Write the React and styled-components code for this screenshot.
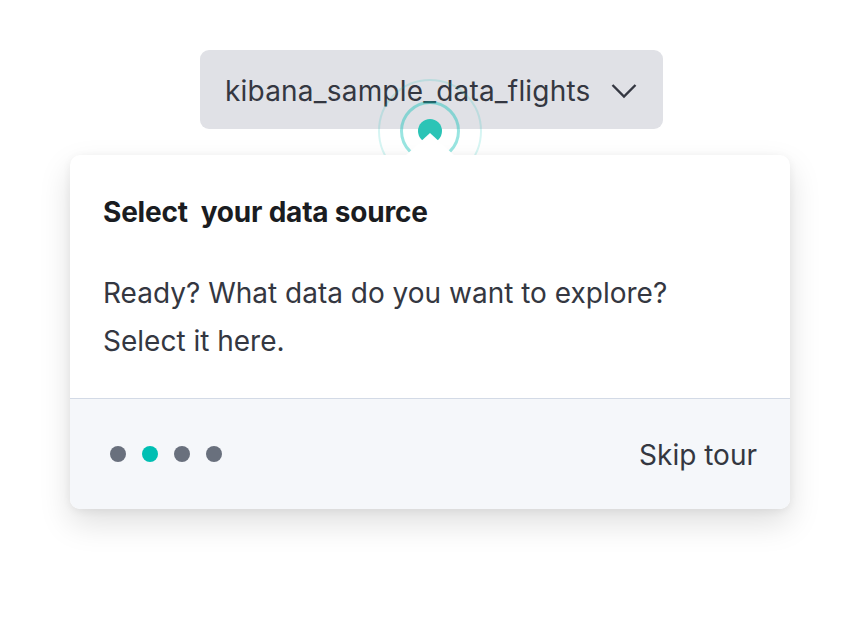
import React from "react";
import styled, { createGlobalStyle } from "styled-components";

const Global = createGlobalStyle`
  html, body { margin: 0; padding: 0; background: #ffffff; }
  body { font-family: Inter, "Noto Sans", sans-serif; -webkit-font-smoothing: antialiased; }
`;

const Page = styled.div`
  width: 860px;
  height: 625px;
  display: flex;
  flex-direction: column;
  align-items: center;
  padding-top: 50px;
  box-sizing: border-box;
`;

const Picker = styled.button`
  width: 463px;
  height: 79px;
  margin-left: 3px;
  border: none;
  border-radius: 9px;
  background: #e0e1e6;
  display: flex;
  align-items: center;
  justify-content: space-between;
  padding: 2px 26px 0 25px;
  box-sizing: border-box;
  font-family: Inter, "Noto Sans", sans-serif;
  font-size: 28px;
  letter-spacing: 0.2px;
  color: #343741;
  cursor: pointer;
`;

const Stage = styled.div`
  position: relative;
  margin-top: 26px;
`;

const Card = styled.div`
  position: relative;
  z-index: 1;
  width: 720px;
  border-radius: 10px;
  background: #ffffff;
  box-shadow: 0 14px 32px rgba(0, 0, 0, 0.13), 0 2px 8px rgba(0, 0, 0, 0.06);
  overflow: hidden;
`;

const Body = styled.div`
  padding: 38px 33px 33px 33px;
`;

const Title = styled.h2`
  margin: 0;
  font-size: 28px;
  line-height: 38px;
  font-weight: 700;
  color: #1a1c21;
  white-space: pre;
  letter-spacing: -0.2px;
`;

const Text = styled.p`
  margin: 38px 0 0 0;
  font-size: 28px;
  line-height: 48px;
  color: #343741;
`;

const Footer = styled.div`
  height: 111px;
  background: #f5f7fa;
  border-top: 1px solid #d3dae6;
  display: flex;
  align-items: center;
  justify-content: space-between;
  padding: 0 33px 0 40px;
  box-sizing: border-box;
`;

const Dots = styled.div`
  display: flex;
  gap: 16px;
`;

const Dot = styled.span`
  width: 16px;
  height: 16px;
  border-radius: 50%;
  background: ${(p) => (p.$active ? "#00bfb3" : "#69707d")};
`;

const Skip = styled.button`
  border: none;
  background: none;
  padding: 2px 0 0 0;
  font-family: Inter, "Noto Sans", sans-serif;
  font-size: 28px;
  color: #343741;
  cursor: pointer;
`;

const Beacon = styled.svg`
  position: absolute;
  z-index: 0;
  left: 305px;
  top: -79px;
  width: 110px;
  height: 110px;
  pointer-events: none;
`;

const Arrow = styled.div`
  position: absolute;
  z-index: 2;
  left: 335px;
  top: -22px;
  width: 0;
  height: 0;
  border-left: 25px solid transparent;
  border-right: 25px solid transparent;
  border-bottom: 23px solid #ffffff;
`;

export default function App() {
  return (
    <>
      <Global />
      <Page>
        <Picker>
          <span>kibana_sample_data_flights</span>
          <svg width="26" height="16" viewBox="0 0 26 16">
            <path d="M1.5 2 L13 13.5 L24.5 2" fill="none" stroke="#343741" strokeWidth="2.4" />
          </svg>
        </Picker>
        <Stage>
          <Beacon viewBox="0 0 110 110">
            <circle cx="55" cy="55" r="51" fill="none" stroke="rgba(0,191,179,0.16)" strokeWidth="2" />
            <circle cx="55" cy="55" r="28.5" fill="none" stroke="rgba(0,191,179,0.4)" strokeWidth="3" />
            <circle cx="55" cy="55" r="12" fill="#2bc4b6" />
          </Beacon>
          <Card>
            <Body>
              <Title>Select  your data source</Title>
              <Text>
                Ready? What data do you want to explore?
                <br />
                Select it here.
              </Text>
            </Body>
            <Footer>
              <Dots>
                <Dot />
                <Dot $active />
                <Dot />
                <Dot />
              </Dots>
              <Skip>Skip tour</Skip>
            </Footer>
          </Card>
          <Arrow />
        </Stage>
      </Page>
    </>
  );
}
